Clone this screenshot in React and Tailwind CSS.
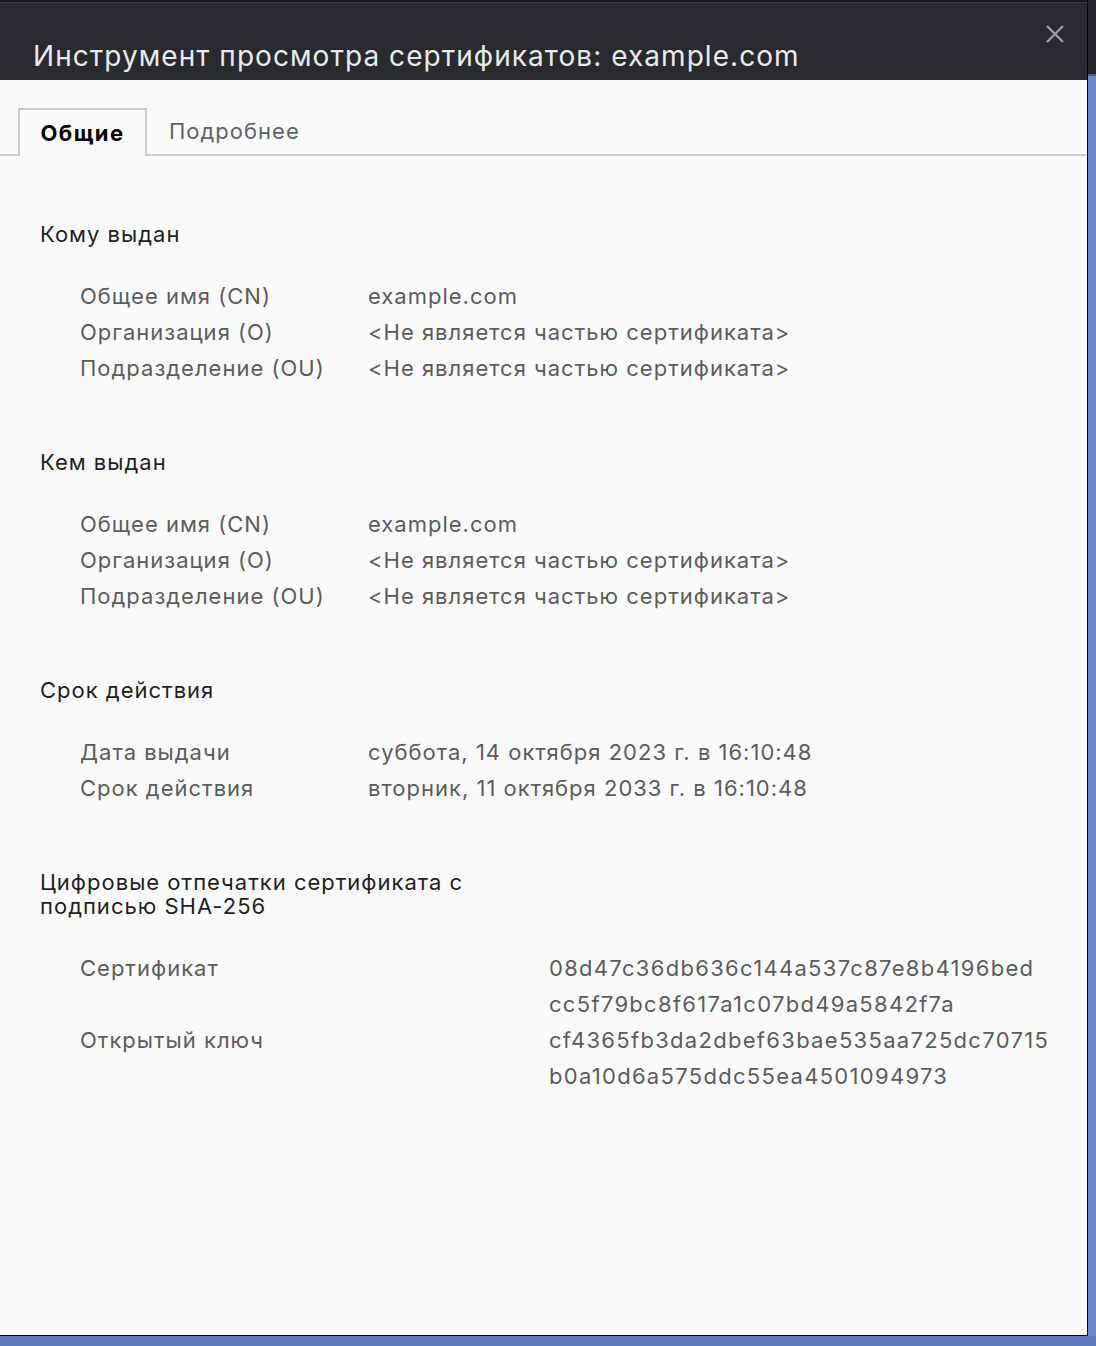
const font = { fontFamily: "Inter, 'Noto Sans', sans-serif" };

const issuedTo = [
  ["Общее имя (CN)", "example.com"],
  ["Организация (O)", "<Не является частью сертификата>"],
  ["Подразделение (OU)", "<Не является частью сертификата>"],
];

const validity = [
  ["Дата выдачи", "суббота, 14 октября 2023 г. в 16:10:48"],
  ["Срок действия", "вторник, 11 октября 2033 г. в 16:10:48"],
];

function Section({ title, rows }) {
  return (
    <section>
      <h3 className="text-[22px] leading-[24px] text-[#1f1f1f]">{title}</h3>
      <div className="mt-8 pl-10">
        {rows.map(([k, v]) => (
          <div key={k} className="flex h-9 items-center text-[22px] text-[#5c5c5c]">
            <div className="w-[288px] shrink-0">{k}</div>
            <div>{v}</div>
          </div>
        ))}
      </div>
    </section>
  );
}

export default function App() {
  return (
    <div className="w-[1096px] h-[1346px] overflow-hidden bg-[#6a86cf] flex flex-col tracking-[1px]" style={font}>
      <div className="flex">
        <div className="w-[1088px] h-[1336px] flex flex-col border-r border-b border-black bg-[#fafafa]">
          <div className="h-[3px] bg-[#17181b] border-b border-[#3a3b3f]" />
          <div className="h-[77px] bg-[#292a2d] flex items-end pl-[33px] pb-[4px] relative">
            <h1 className="text-[28px] leading-[40px] text-[#e8eaed] tracking-[1.05px]">
              Инструмент просмотра сертификатов: example.com
            </h1>
            <button className="absolute right-[20px] top-[19px] text-[#9aa0a6]">
              <svg width="24" height="24" viewBox="0 0 24 24" fill="none" stroke="currentColor" strokeWidth="2.4">
                <path d="M4 4l16 16M20 4L4 20" />
              </svg>
            </button>
          </div>

          <div className="flex items-end mt-[28px] border-b-2 border-[#cbcbcb]">
            <div className="w-[18px]" />
            <div className="h-[48px] w-[129px] -mb-[2px] border-2 border-b-0 border-[#cbcbcb] bg-[#fafafa] flex items-center justify-center text-[22px] font-bold text-black tracking-[1.5px]">
              Общие
            </div>
            <div className="h-[46px] px-[22px] flex items-center text-[22px] text-[#5f6368]">Подробнее</div>
          </div>

          <div className="pl-10 pt-[66px] flex flex-col gap-16">
            <Section title="Кому выдан" rows={issuedTo} />
            <Section title="Кем выдан" rows={issuedTo} />
            <Section title="Срок действия" rows={validity} />
            <section>
              <h3 className="text-[22px] leading-[24px] text-[#1f1f1f] w-[460px]">
                Цифровые отпечатки сертификата с подписью SHA-256
              </h3>
              <div className="mt-8 pl-10 flex text-[22px] leading-9 text-[#5c5c5c]">
                <div className="w-[469px] shrink-0">
                  <div className="h-[72px]">Сертификат</div>
                  <div>Открытый ключ</div>
                </div>
                <div className="tracking-[1.3px]">
                  <div>08d47c36db636c144a537c87e8b4196bed</div>
                  <div>cc5f79bc8f617a1c07bd49a5842f7a</div>
                  <div>cf4365fb3da2dbef63bae535aa725dc70715</div>
                  <div>b0a10d6a575ddc55ea4501094973</div>
                </div>
              </div>
            </section>
          </div>
        </div>
        <div className="w-[8px] flex flex-col">
          <div className="h-[74px] bg-[#242528]" />
          <div className="h-[2px] bg-[#5a5e6a]" />
          <div className="flex-1 bg-[#6a86cf]" />
        </div>
      </div>
      <div className="flex-1 bg-[#5f7cc4]" />
    </div>
  );
}
